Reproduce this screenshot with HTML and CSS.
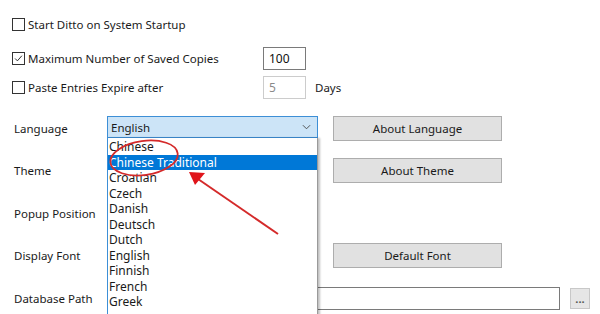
FILE: index.html
```html
<!DOCTYPE html>
<html lang="en">
<head>
  <meta charset="UTF-8">
  <title>Ditto Options</title>
  <link rel="stylesheet" href="styles.css">
</head>
<body>
  <div class="page">
    <div class="opt-row first">
      <label class="check"><span class="box"></span>Start Ditto on System Startup</label>
    </div>
    <div class="opt-row second">
      <label class="check"><span class="box"><svg viewBox="0 0 13 13" width="13" height="13"><path d="M2.5 6.5 L5.2 9.3 L10.5 3.2" fill="none" stroke="#222" stroke-width="1.1"/></svg></span>Maximum Number of Saved Copies</label>
      <input class="num" type="text" value="100">
    </div>
    <div class="opt-row third">
      <label class="check"><span class="box"></span>Paste Entries Expire after</label>
      <input class="num disabled" type="text" value="5" disabled>
      <span class="unit">Days</span>
    </div>

    <div class="settings">
      <div class="lbl">Language</div>
      <div class="ctl combo-wrap">
        <div class="combo">English<svg class="chev" viewBox="0 0 10 6" width="9" height="6"><path d="M1 1 L5 5 L9 1" fill="none" stroke="#444" stroke-width="1"/></svg></div>
        <ul class="drop">
          <li>Chinese</li>
          <li class="sel">Chinese Traditional</li>
          <li>Croatian</li>
          <li>Czech</li>
          <li>Danish</li>
          <li>Deutsch</li>
          <li>Dutch</li>
          <li>English</li>
          <li>Finnish</li>
          <li>French</li>
          <li>Greek</li>
        </ul>
      </div>
      <div class="btn-cell"><button>About Language</button></div>

      <div class="lbl">Theme</div>
      <div class="ctl"></div>
      <div class="btn-cell"><button>About Theme</button></div>

      <div class="lbl">Popup Position</div>
      <div class="ctl"></div>
      <div class="btn-cell"></div>

      <div class="lbl">Display Font</div>
      <div class="ctl"></div>
      <div class="btn-cell"><button>Default Font</button></div>

      <div class="lbl">Database Path</div>
      <div class="ctl path-row">
        <input class="path" type="text" value="">
        <button class="dots">...</button>
      </div>
    </div>

    <svg class="marks" viewBox="0 0 600 314" width="600" height="314">
      <ellipse cx="144" cy="158" rx="34" ry="17" transform="rotate(-8 144 158)" fill="none" stroke="#d42a2a" stroke-width="1.8"/>
      <line x1="278" y1="234" x2="198" y2="179" stroke="#d42a2a" stroke-width="2"/>
      <polygon points="189,172 205,173 195,185" fill="#e0151b"/>
    </svg>
  </div>
</body>
</html>
```

FILE: styles.css
```css
body {
  margin: 0;
  background: #fff;
  font-family: "Noto Sans", "Open Sans", sans-serif;
  font-size: 11.5px;
  color: #1a1a1a;
}

.page {
  position: relative;
  width: 600px;
  height: 314px;
  overflow: hidden;
  padding-left: 12px;
  box-sizing: border-box;
}

.opt-row {
  display: flex;
  align-items: center;
  height: 23px;
}

.opt-row.first {
  padding-top: 13px;
  height: 22px;
}

.opt-row.second {
  margin-top: 12px;
}

.opt-row.third {
  margin-top: 6px;
}

.check {
  display: flex;
  align-items: center;
  width: 251px;
}

.box {
  width: 11px;
  height: 11px;
  border: 1px solid #333;
  margin-right: 3px;
  display: flex;
  align-items: center;
  justify-content: center;
}

.box svg {
  width: 11px;
  height: 11px;
}

.num {
  width: 43px;
  height: 23px;
  box-sizing: border-box;
  border: 1px solid #7a7a7a;
  padding: 0 5px;
  font: inherit;
  font-size: 12px;
  color: #111;
}

.num.disabled {
  border-color: #cccccc;
  color: #8a8a8a;
  background: #fff;
}

.unit {
  margin-left: 9px;
}

.settings {
  display: grid;
  grid-template-columns: 93px 226px 169px;
  grid-auto-rows: 42.5px;
  margin-top: 8px;
  margin-left: 2px;
}

.lbl {
  display: flex;
  align-items: center;
}

.ctl {
  display: flex;
  align-items: center;
}

.combo-wrap {
  position: relative;
}

.combo {
  width: 211px;
  height: 22px;
  box-sizing: border-box;
  background: #cce4f7;
  border: 1px solid #3d8fd6;
  display: flex;
  align-items: center;
  justify-content: space-between;
  padding: 0 6px 0 3px;
  margin-top: -2px;
}

.chev {
  display: block;
}

.drop {
  position: absolute;
  left: 0;
  top: 31px;
  width: 211px;
  height: 190px;
  margin: 0;
  padding: 1px 0 0;
  list-style: none;
  background: #fff;
  border-left: 1px solid #3d8fd6;
  border-right: 1px solid #9a9a9a;
  box-shadow: 2px 0 2px rgba(0, 0, 0, 0.25);
  z-index: 2;
  box-sizing: border-box;
}

.drop li {
  height: 15.5px;
  line-height: 15.5px;
  padding-left: 1px;
  font-size: 12px;
}

.drop li.sel {
  background: #0078d7;
  color: #fff;
}

.btn-cell {
  display: flex;
  align-items: center;
}

button {
  width: 169px;
  height: 25px;
  background: #e1e1e1;
  border: 1px solid #adadad;
  font: inherit;
  color: #1a1a1a;
  padding: 0;
}

.path-row {
  grid-column: 2 / 4;
  gap: 10px;
}

.path {
  width: 453px;
  height: 23px;
  flex: none;
  box-sizing: border-box;
  border: 1px solid #7a7a7a;
}

.dots {
  flex: none;
  width: 20px;
  height: 21px;
  font-size: 11px;
  font-weight: bold;
  color: #555;
  background: #e6e6e6;
  border: 1px solid #c8c8c8;
  line-height: 1;
}

.marks {
  position: absolute;
  left: 0;
  top: 0;
  pointer-events: none;
  z-index: 3;
}
```
